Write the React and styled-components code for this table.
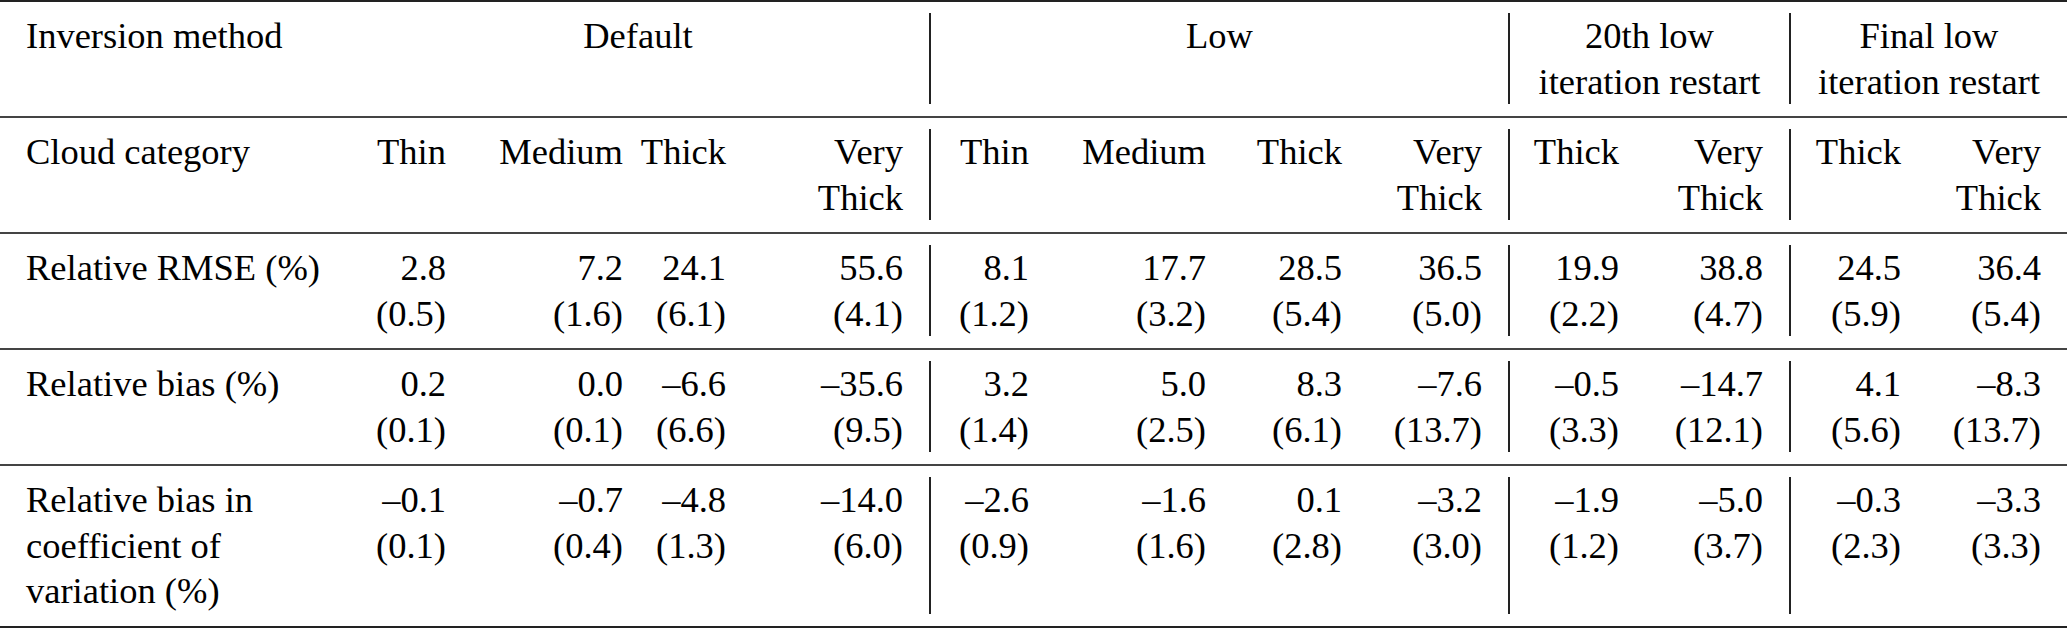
import React from 'react';
import styled, { createGlobalStyle } from 'styled-components';

// column widths in px, 13 columns: label + 4 Default + 4 Low + 2 + 2
const columns = [347, 125, 177, 103, 177, 126, 177, 136, 140, 137, 144, 138, 140];
// columns that start a new group and carry a vertical rule on the left
const dividers = [5, 9, 11];

const serifStack =
  '"Liberation Serif", "Times New Roman", Tinos, "Nimbus Roman", "TeX Gyre Termes", "Noto Serif", "DejaVu Serif", FreeSerif, serif';

const groups = [
  { label: ['Default'], span: 4, divider: false },
  { label: ['Low'], span: 4, divider: true },
  { label: ['20th low', 'iteration restart'], span: 2, divider: true },
  { label: ['Final low', 'iteration restart'], span: 2, divider: true },
];

const categories = [
  ['Thin'], ['Medium'], ['Thick'], ['Very', 'Thick'],
  ['Thin'], ['Medium'], ['Thick'], ['Very', 'Thick'],
  ['Thick'], ['Very', 'Thick'],
  ['Thick'], ['Very', 'Thick'],
];

const rows = [
  {
    label: ['Relative RMSE (%)'],
    values: [
      ['2.8', '(0.5)'], ['7.2', '(1.6)'], ['24.1', '(6.1)'], ['55.6', '(4.1)'],
      ['8.1', '(1.2)'], ['17.7', '(3.2)'], ['28.5', '(5.4)'], ['36.5', '(5.0)'],
      ['19.9', '(2.2)'], ['38.8', '(4.7)'],
      ['24.5', '(5.9)'], ['36.4', '(5.4)'],
    ],
  },
  {
    label: ['Relative bias (%)'],
    values: [
      ['0.2', '(0.1)'], ['0.0', '(0.1)'], ['–6.6', '(6.6)'], ['–35.6', '(9.5)'],
      ['3.2', '(1.4)'], ['5.0', '(2.5)'], ['8.3', '(6.1)'], ['–7.6', '(13.7)'],
      ['–0.5', '(3.3)'], ['–14.7', '(12.1)'],
      ['4.1', '(5.6)'], ['–8.3', '(13.7)'],
    ],
  },
  {
    label: ['Relative bias in', 'coefficient of', 'variation (%)'],
    values: [
      ['–0.1', '(0.1)'], ['–0.7', '(0.4)'], ['–4.8', '(1.3)'], ['–14.0', '(6.0)'],
      ['–2.6', '(0.9)'], ['–1.6', '(1.6)'], ['0.1', '(2.8)'], ['–3.2', '(3.0)'],
      ['–1.9', '(1.2)'], ['–5.0', '(3.7)'],
      ['–0.3', '(2.3)'], ['–3.3', '(3.3)'],
    ],
    last: true,
  },
];

const Lines = ({ lines }) => lines.map((line) => <Line key={line}>{line}</Line>);

const App = () => (
  <>
    <GlobalStyle />
    <Table>
      <Cell>
        <Inner $align="start">
          <Lines lines={['Inversion method']} />
        </Inner>
      </Cell>
      {groups.map((g) => (
        <Cell key={g.label[0]} $span={g.span}>
          <Inner $align="center" $divider={g.divider}>
            <Lines lines={g.label} />
          </Inner>
        </Cell>
      ))}

      <Cell>
        <Inner $align="start">
          <Lines lines={['Cloud category']} />
        </Inner>
      </Cell>
      {categories.map((c, i) => (
        <Cell key={`cat-${i}`}>
          <Inner $align="end" $divider={dividers.includes(i + 1)}>
            <Lines lines={c} />
          </Inner>
        </Cell>
      ))}

      {rows.map((row) => (
        <React.Fragment key={row.label[0]}>
          <Cell $last={row.last}>
            <Inner $align="start">
              <Lines lines={row.label} />
            </Inner>
          </Cell>
          {row.values.map((v, i) => (
            <Cell key={`${row.label[0]}-${i}`} $last={row.last}>
              <Inner $align="end" $divider={dividers.includes(i + 1)}>
                <Lines lines={v} />
              </Inner>
            </Cell>
          ))}
        </React.Fragment>
      ))}
    </Table>
  </>
);

export default App;

const GlobalStyle = createGlobalStyle`
  html, body {
    margin: 0;
    padding: 0;
    background: #ffffff;
  }
  body {
    font-family: ${serifStack};
    color: #000;
  }
`;

const Table = styled.div`
  display: grid;
  grid-template-columns: ${columns.map((w) => `${w}px`).join(' ')};
  width: 2067px;
  border-top: 2px solid #222;
  font-family: ${serifStack};
  font-size: 36.5px;
  line-height: 45.5px;
`;

const Cell = styled.div`
  grid-column: span ${(p) => p.$span || 1};
  display: flex;
  min-width: 0;
  padding: 11px 0 12px;
  border-bottom: ${(p) => (p.$last ? '3px solid #222' : '2px solid #444')};
`;

const alignMap = { start: 'flex-start', center: 'center', end: 'flex-end' };
const padMap = { start: '0 0 0 26px', center: '0 26px', end: '0 26px 0 0' };

const Inner = styled.div`
  flex: 1;
  min-width: 0;
  display: flex;
  flex-direction: column;
  align-items: ${(p) => alignMap[p.$align]};
  padding: ${(p) => padMap[p.$align]};
  border-left: ${(p) => (p.$divider ? '2px solid #222' : 'none')};
`;

const Line = styled.span`
  display: block;
  white-space: nowrap;
`;
